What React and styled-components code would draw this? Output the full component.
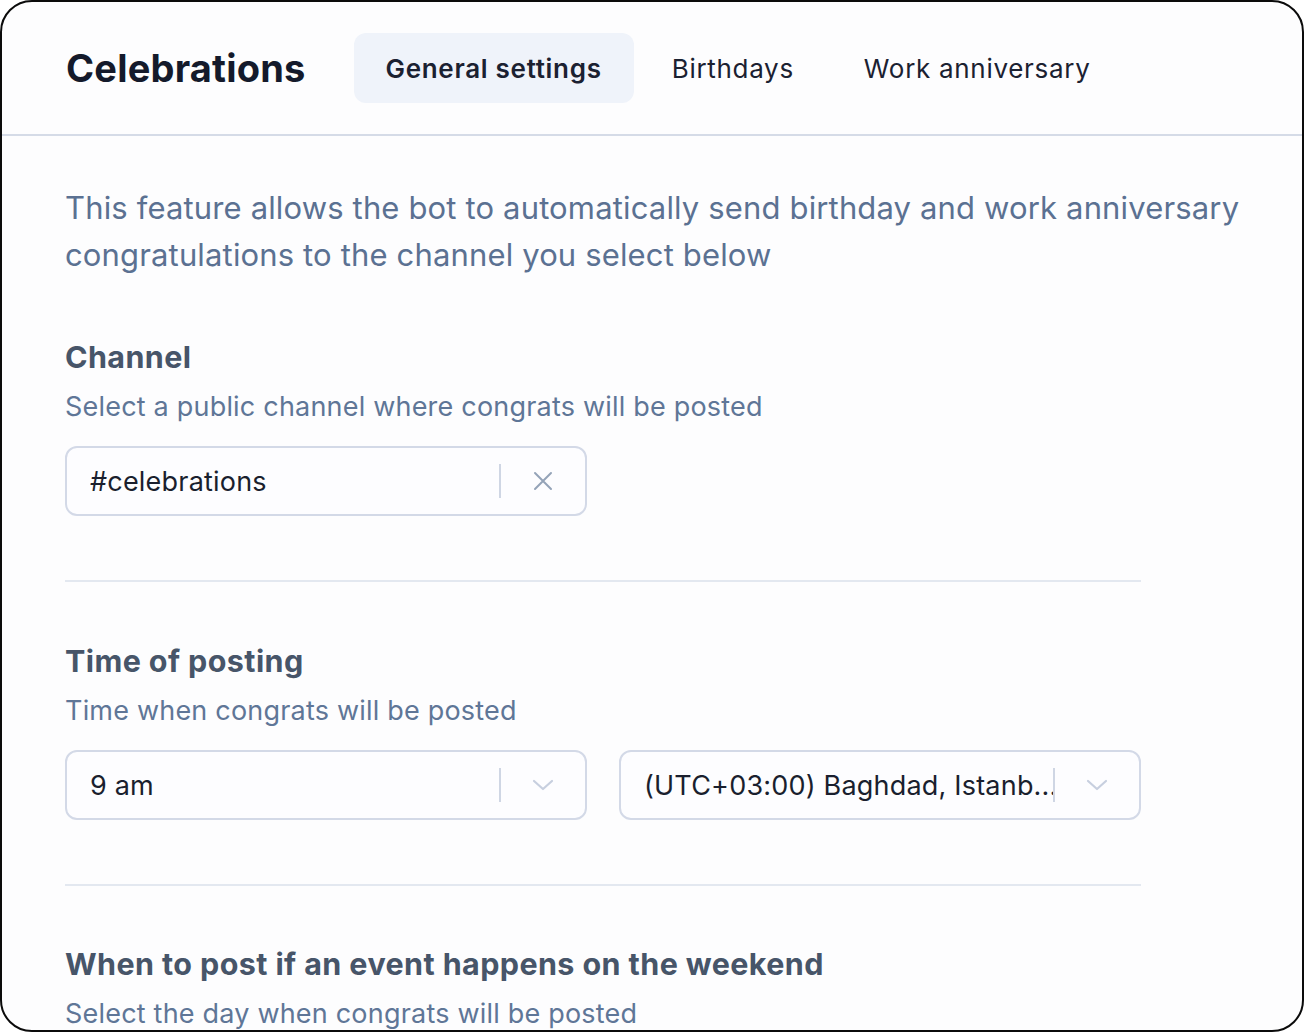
import React from 'react';
import styled, { createGlobalStyle } from 'styled-components';

const GlobalStyle = createGlobalStyle`
  html, body {
    margin: 0;
    padding: 0;
    background: #ffffff;
  }
  * {
    box-sizing: border-box;
  }
`;

const Frame = styled.div`
  width: 1304px;
  height: 1032px;
  border: 2px solid #0b0b0b;
  border-radius: 32px;
  overflow: hidden;
  background: #fdfdfe;
  font-family: Inter, 'Noto Sans', sans-serif;
`;

const Header = styled.header`
  display: flex;
  align-items: center;
  height: 134px;
  padding: 0 64px;
  border-bottom: 2px solid #d5dbe7;
`;

const Title = styled.h1`
  margin: 0 48px 0 0;
  font-size: 38px;
  font-weight: 700;
  letter-spacing: 0.2px;
  color: #141a2b;
`;

const Tabs = styled.nav`
  display: flex;
  gap: 6px;
`;

const Tab = styled.div`
  display: flex;
  align-items: center;
  height: 70px;
  padding: 0 32px;
  border-radius: 12px;
  font-size: 26px;
  letter-spacing: 0.7px;
  font-weight: ${p => (p.$active ? 600 : 400)};
  color: #1b2131;
  background: ${p => (p.$active ? '#eff3fa' : 'transparent')};
`;

const Body = styled.main`
  padding: 0 24px 0 63px;
`;

const Intro = styled.p`
  margin: 48px 0 0;
  max-width: 1200px;
  font-size: 31px;
  line-height: 47px;
  letter-spacing: 0.15px;
  color: #5b7192;
`;

const Section = styled.section`
  margin-top: ${p => p.$top}px;
`;

const Heading = styled.h2`
  margin: 0;
  font-size: 30.5px;
  line-height: 36px;
  letter-spacing: 0.4px;
  font-weight: 700;
  color: #475569;
`;

const Sub = styled.p`
  margin: 14px 0 0;
  font-size: 27px;
  line-height: 36px;
  letter-spacing: 0.2px;
  color: #5f7697;
`;

const Controls = styled.div`
  display: grid;
  grid-template-columns: 522px 522px;
  gap: 32px;
  margin-top: 21px;
`;

const Field = styled.div`
  display: flex;
  align-items: center;
  height: 70px;
  padding: 0 0 0 23px;
  border: 2px solid #d3d9e7;
  border-radius: 12px;
  background: #fdfdff;
`;

const Value = styled.span`
  flex: 1;
  min-width: 0;
  white-space: nowrap;
  overflow: hidden;
  text-overflow: clip;
  font-size: 27px;
  letter-spacing: 0.2px;
  color: #1a1f2e;
`;

const Sep = styled.span`
  flex: none;
  width: 2px;
  height: 34px;
  background: #cfd6e4;
`;

const IconBox = styled.span`
  flex: none;
  display: flex;
  align-items: center;
  justify-content: center;
  width: 84px;
  height: 100%;
`;

const Divider = styled.hr`
  width: 1076px;
  height: 2px;
  margin: 64px 0 0;
  border: 0;
  background: #e3e8f0;
`;

const ClearIcon = () => (
  <svg width="20" height="20" viewBox="0 0 20 20" fill="none">
    <path d="M2 2L18 18M18 2L2 18" stroke="#94a3b8" strokeWidth="2" strokeLinecap="round" />
  </svg>
);

const ChevronIcon = () => (
  <svg width="22" height="12" viewBox="0 0 22 12" fill="none">
    <path d="M2 2L11 10L20 2" stroke="#c7cfdf" strokeWidth="2.2" strokeLinecap="round" strokeLinejoin="round" />
  </svg>
);

const SelectBox = ({ value, clearable }) => (
  <Field>
    <Value>{value}</Value>
    <Sep />
    <IconBox>{clearable ? <ClearIcon /> : <ChevronIcon />}</IconBox>
  </Field>
);

const App = () => (
  <>
    <GlobalStyle />
    <Frame>
      <Header>
        <Title>Celebrations</Title>
        <Tabs>
          <Tab $active>General settings</Tab>
          <Tab>Birthdays</Tab>
          <Tab>Work anniversary</Tab>
        </Tabs>
      </Header>
      <Body>
        <Intro>
          This feature allows the bot to automatically send birthday and work anniversary
          congratulations to the channel you select below
        </Intro>

        <Section $top={61}>
          <Heading>Channel</Heading>
          <Sub>Select a public channel where congrats will be posted</Sub>
          <Controls>
            <SelectBox value="#celebrations" clearable />
          </Controls>
        </Section>
        <Divider />

        <Section $top={61}>
          <Heading>Time of posting</Heading>
          <Sub>Time when congrats will be posted</Sub>
          <Controls>
            <SelectBox value="9 am" />
            <SelectBox value="(UTC+03:00) Baghdad, Istanb..." />
          </Controls>
        </Section>
        <Divider />

        <Section $top={60}>
          <Heading>When to post if an event happens on the weekend</Heading>
          <Sub>Select the day when congrats will be posted</Sub>
        </Section>
      </Body>
    </Frame>
  </>
);

export default App;
